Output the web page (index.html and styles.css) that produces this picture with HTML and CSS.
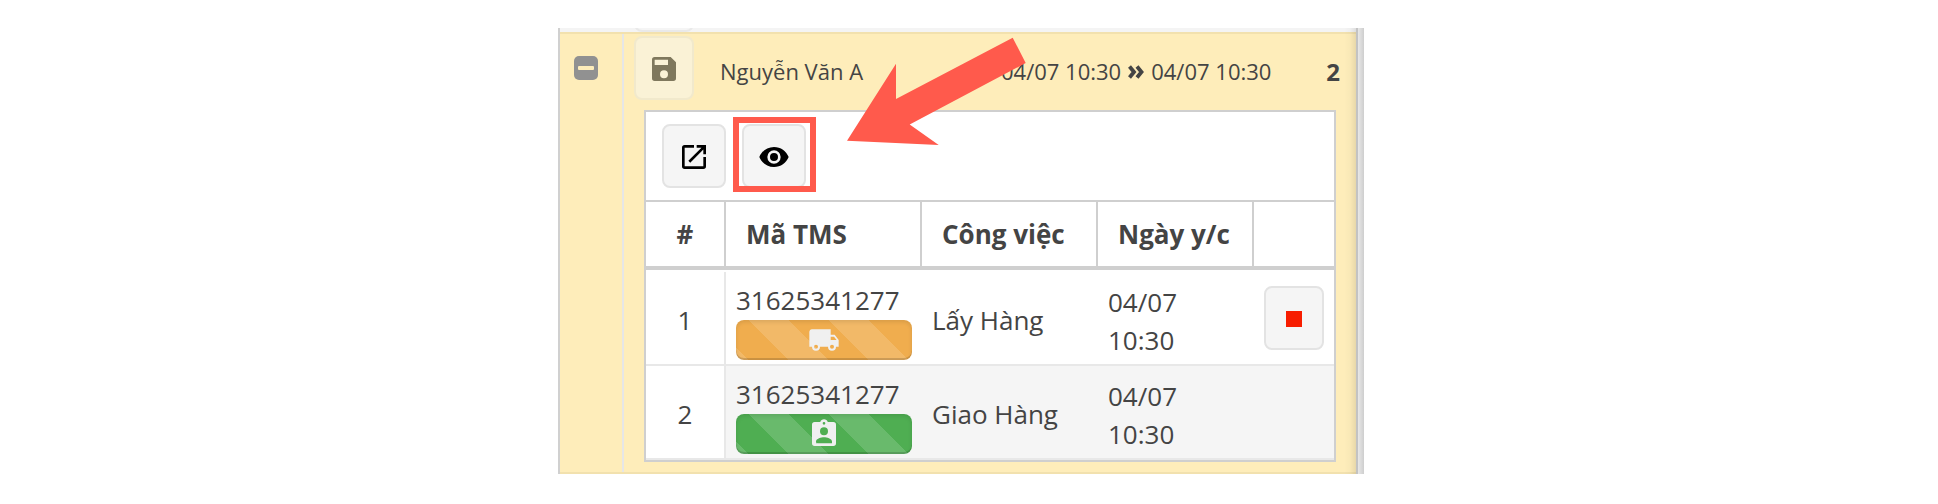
FILE: index.html
```html
<!DOCTYPE html>
<html lang="vi">
<head>
<meta charset="utf-8">
<title>TMS</title>
<link rel="stylesheet" href="styles.css">
</head>
<body>
<main class="grid">
  <div class="grid-body">
    <div class="prev-row"><span class="prev-button"></span></div>
    <div class="record">
      <div class="toggle-col">
        <span class="toggle"><span class="toggle-bar"></span></span>
      </div>
      <div class="record-main">
        <div class="summary">
          <button class="btn btn-save" aria-label="Save"><svg class="icon" viewBox="0 0 24 24"><path d="M15 9H5V5h10M12 19a3 3 0 0 1-3-3 3 3 0 0 1 3-3 3 3 0 0 1 3 3 3 3 0 0 1-3 3M17 3H5a2 2 0 0 0-2 2v14a2 2 0 0 0 2 2h14a2 2 0 0 0 2-2V7l-4-4z"/></svg></button>
          <span class="driver">Nguyễn Văn A</span>
          <span class="times"><span>04/07 10:30</span><svg class="chevrons" viewBox="0 0 16 14"><path d="M1.500 1.500L6 7l-4.500 5.500M9 1.500L13.500 7 9 12.500"/></svg><span>04/07 10:30</span></span>
          <span class="count">2</span>
        </div>
        <section class="panel">
          <div class="toolbar">
            <button class="btn" aria-label="Open"><svg class="icon" viewBox="0 0 24 24"><path d="M14 3v2h3.59l-9.83 9.83 1.41 1.41L19 6.41V10h2V3m-2 16H5V5h7V3H5a2 2 0 0 0-2 2v14a2 2 0 0 0 2 2h14a2 2 0 0 0 2-2v-7h-2v7z"/></svg></button>
            <button class="btn btn-view" aria-label="View"><svg class="icon" viewBox="0 0 24 24"><path d="M12 9a3 3 0 0 0-3 3 3 3 0 0 0 3 3 3 3 0 0 0 3-3 3 3 0 0 0-3-3m0 8a5 5 0 0 1-5-5 5 5 0 0 1 5-5 5 5 0 0 1 5 5 5 5 0 0 1-5 5m0-12.5C7 4.5 2.73 7.61 1 12c1.73 4.39 6 7.5 11 7.5s9.270-3.110 11-7.5c-1.730-4.390-6-7.500-11-7.500z"/></svg><span class="highlight"></span></button>
          </div>
          <div class="row head">
            <div class="cell center">#</div>
            <div class="cell">Mã TMS</div>
            <div class="cell">Công việc</div>
            <div class="cell">Ngày y/c</div>
            <div class="cell"></div>
          </div>
          <div class="row item">
            <div class="cell index">1</div>
            <div class="cell code">31625341277
              <div class="bar bar-pickup"><svg class="icon" viewBox="0 0 24 24"><path d="M18 18.5a1.500 1.500 0 0 0 1.500-1.500 1.500 1.500 0 0 0-1.500-1.500 1.500 1.500 0 0 0-1.500 1.500 1.500 1.500 0 0 0 1.500 1.500m1.500-9H17V12h4.460L19.500 9.500M6 18.500A1.500 1.500 0 0 0 7.500 17 1.500 1.500 0 0 0 6 15.500 1.500 1.500 0 0 0 4.500 17 1.500 1.500 0 0 0 6 18.500M20 8l3 4v5h-2a3 3 0 0 1-3 3 3 3 0 0 1-3-3H9a3 3 0 0 1-3 3 3 3 0 0 1-3-3H1V6c0-1.110.890-2 2-2h14v4h3z"/></svg></div>
            </div>
            <div class="cell job">Lấy Hàng</div>
            <div class="cell date"><span>04/07<br>10:30</span></div>
            <div class="cell action"><button class="btn btn-stop" aria-label="Stop"><span class="stop"></span></button></div>
          </div>
          <div class="row item alt">
            <div class="cell index">2</div>
            <div class="cell code">31625341277
              <div class="bar bar-deliver"><svg class="icon" viewBox="0 0 24 24"><path d="M18 19H6v-1.400c0-2 4-3.100 6-3.100s6 1.100 6 3.100M12 7a3 3 0 0 1 3 3 3 3 0 0 1-3 3 3 3 0 0 1-3-3 3 3 0 0 1 3-3m0-4a1 1 0 0 1 1 1 1 1 0 0 1-1 1 1 1 0 0 1-1-1 1 1 0 0 1 1-1m7 0h-4.180C14.400 1.840 13.300 1 12 1s-2.400.840-2.820 2H5a2 2 0 0 0-2 2v14a2 2 0 0 0 2 2h14a2 2 0 0 0 2-2V5a2 2 0 0 0-2-2z"/></svg></div>
            </div>
            <div class="cell job">Giao Hàng</div>
            <div class="cell date"><span>04/07<br>10:30</span></div>
            <div class="cell action"></div>
          </div>
        </section>
      </div>
    </div>
  </div>
  <div class="splitter"></div>
</main>
<svg class="arrow" viewBox="847 37 180 109"><path d="M1012.700 37.700L1025.700 63 909.700 124.500 938.700 145 847 140.700 896 63.700V99z"/></svg>
</body>
</html>
```
FILE: styles.css
```css
* { box-sizing: border-box; }

body {
  margin: 0;
  height: 504px;
  padding: 28px 574px 0 558px;
  overflow: hidden;
  background: #fff;
  color: #444;
  font: 26px/40px "Open Sans", sans-serif;
}

.grid {
  display: flex;
  width: 806px;
  height: 446px;
  border-left: 2px solid #d0d0d0;
}

.grid-body {
  position: relative;
  display: flex;
  flex-direction: column;
  width: 796px;
}

/* shade cast by the right edge */
.grid-body::after {
  content: "";
  position: absolute;
  inset: 0 0 0 auto;
  width: 12px;
  background: linear-gradient(90deg, rgba(0, 0, 0, 0), rgba(0, 0, 0, .02) 50%, rgba(0, 0, 0, .09));
}

.splitter {
  width: 8px;
  border-left: 2px solid #c3c3c3;
  background: linear-gradient(90deg, #e8e8e8, #cecece);
}

.prev-row {
  height: 4px;
  padding-left: 74px;
  background: #f4f4f4;
  overflow: hidden;
  display: flex;
  align-items: flex-end;
}

.prev-button {
  flex: none;
  width: 60px;
  height: 30px;
  border: 2px solid #e9e9e9;
  border-radius: 8px;
  background: #f5f5f5;
}

.record {
  display: flex;
  flex: 1;
  background: #feedba;
  border-top: 2px solid #f2e1ae;
  border-bottom: 2px solid #f2e1ae;
}

.toggle-col {
  width: 64px;
  padding: 22px 0 0 14px;
  border-right: 2px solid #e6e6e6;
}

.toggle {
  display: flex;
  align-items: center;
  justify-content: center;
  width: 24px;
  height: 24px;
  border-radius: 5px;
  background: #919191;
}

.toggle-bar {
  width: 16px;
  height: 4px;
  border-radius: 1px;
  background: #feedba;
}

.record-main { width: 732px; }

.summary {
  display: flex;
  height: 76px;
  padding: 2px 16px 0 10px;
  font-size: 22px;
  line-height: 71px;
}

.driver {
  width: 281px;
  margin-left: 26px;
}

.times {
  display: flex;
  align-items: center;
  height: 71px;
}

.chevrons {
  width: 16px;
  height: 14px;
  margin: 1px 7px 0;
  fill: none;
  stroke: #444;
  stroke-width: 3.8;
}

.count {
  margin-left: auto;
  font-size: 24px;
  font-weight: 700;
}

.btn {
  position: relative;
  display: flex;
  align-items: center;
  justify-content: center;
  width: 64px;
  height: 64px;
  padding: 1px 0 0;
  border: 2px solid #e3e3e3;
  border-radius: 8px;
  background: #f5f5f5;
}

.icon {
  width: 32px;
  height: 32px;
}

.btn-save {
  width: 60px;
  border-color: #f1e9cc;
  background: #faf2d6;
}

.btn-save .icon { fill: #7f785d; }

.panel {
  width: 692px;
  height: 352px;
  margin-left: 20px;
  border: 2px solid #cfcfcf;
  background: #fff;
}

.toolbar {
  display: flex;
  gap: 16px;
  height: 90px;
  padding: 12px 16px;
  border-bottom: 2px solid #cfcfcf;
}

.highlight {
  position: absolute;
  left: -11px;
  top: -9px;
  width: 83px;
  height: 75px;
  border: 6px solid #ff5a4c;
}

.row {
  display: grid;
  grid-template-columns: 80px 196px 176px 156px 80px;
}

.head {
  height: 68px;
  border-bottom: 4px solid #cfcfcf;
  font-weight: 700;
  line-height: 64px;
}

.head .cell {
  padding-left: 20px;
  border-right: 2px solid #cfcfcf;
}

.head .center {
  padding-left: 0;
  text-align: center;
}

.head .cell:last-child { border-right: 0; }

.item {
  height: 94px;
  border-bottom: 2px solid #e8e8e8;
}

.head + .item { margin-top: 2px; }

.alt { background: #f5f5f5; }

.index {
  padding-top: 28px;
  border-right: 2px solid #e8e8e8;
  background: #fff;
  text-align: center;
}

.code { padding: 8px 10px 0; }

.job { padding: 28px 0 0 10px; }

.date {
  padding: 11px 0 0 10px;
  line-height: 38px;
}

.action { padding: 14px 10px; }

.btn-stop { width: 60px; }

.stop {
  width: 16px;
  height: 16px;
  background: #f71d00;
}

.bar {
  display: flex;
  align-items: center;
  justify-content: center;
  height: 40px;
  border-radius: 8px;
  background-image: linear-gradient(45deg, rgba(255, 255, 255, .15) 25%, transparent 25%, transparent 50%, rgba(255, 255, 255, .15) 50%, rgba(255, 255, 255, .15) 75%, transparent 75%);
  background-size: 80px 80px;
  background-position: 13px 0;
  box-shadow: inset 0 -2px 0 rgba(0, 0, 0, .15), inset 0 2px 4px rgba(0, 0, 0, .1);
}

.bar .icon { fill: #f0f0f0; }

.bar-pickup { background-color: #f0ad4e; }

.bar-deliver { background-color: #4fae52; }

.arrow {
  position: absolute;
  left: 847px;
  top: 37px;
  width: 180px;
  height: 109px;
  fill: #ff5a4c;
}
```
